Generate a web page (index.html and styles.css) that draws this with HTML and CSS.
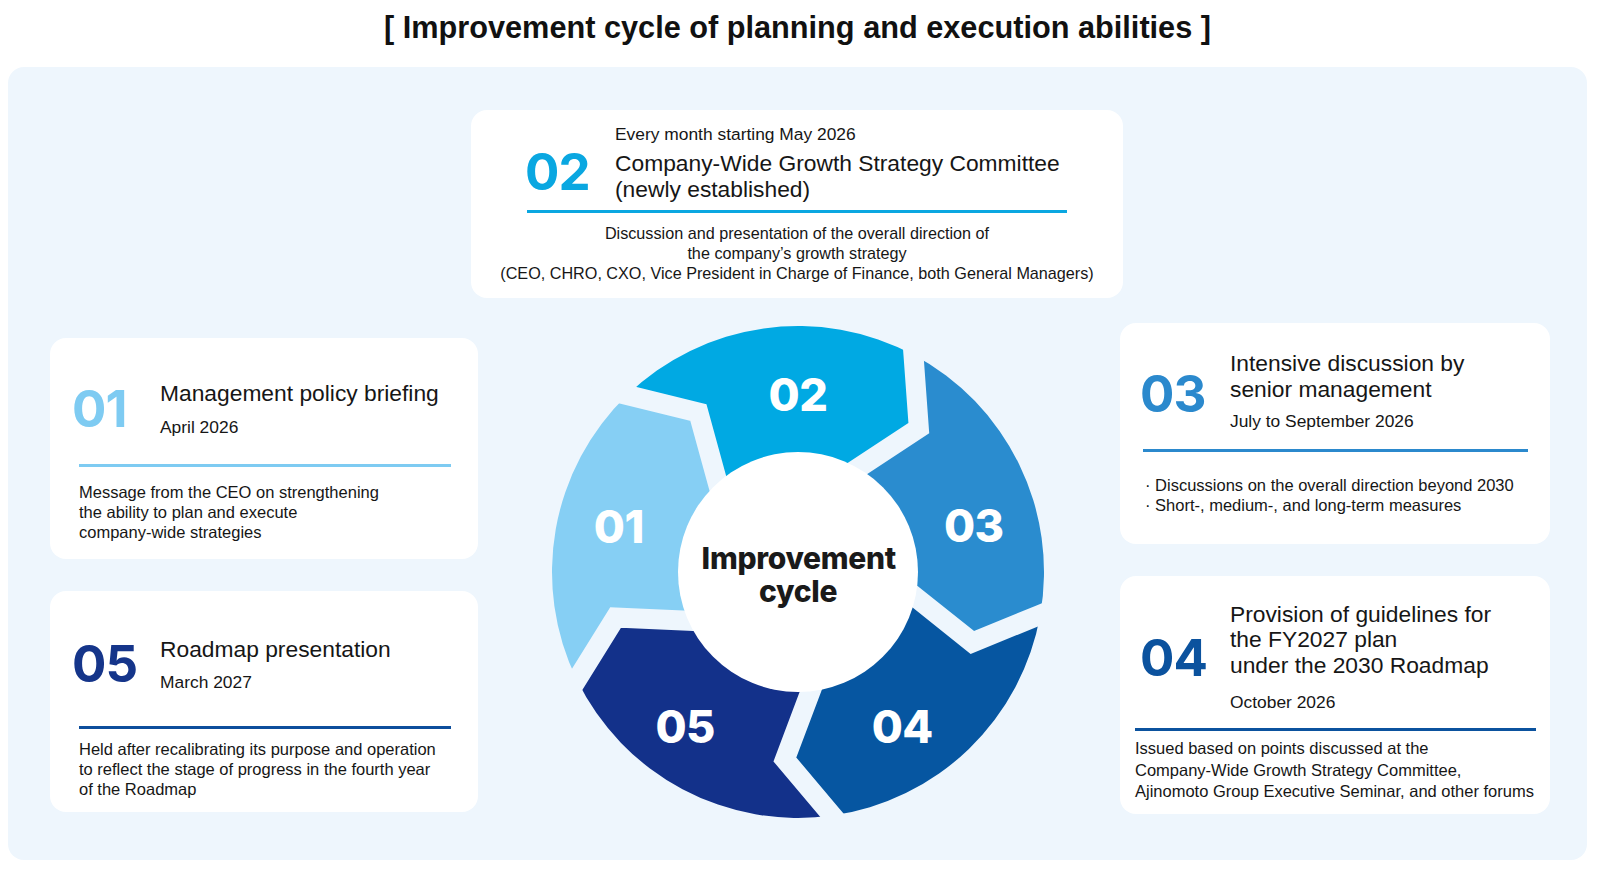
FILE: index.html
```html
<!DOCTYPE html>
<html lang="en">
<head>
<meta charset="utf-8">
<title>Improvement cycle of planning and execution abilities</title>
<link rel="stylesheet" href="styles.css">
</head>
<body>
<div class="page">
  <h1 class="title">[ Improvement cycle of planning and execution abilities ]</h1>
  <div class="panel">
    <div class="card card-top">
      <div class="head-row">
        <div class="num num-02">02</div>
        <div class="titles">
          <div class="label">Every month starting May 2026</div>
          <div class="heading">Company-Wide Growth Strategy Committee<br>(newly established)</div>
        </div>
      </div>
      <div class="rule rule-02"></div>
      <p class="body body-center">Discussion and presentation of the overall direction of<br>the company’s growth strategy<br>(CEO, CHRO, CXO, Vice President in Charge of Finance, both General Managers)</p>
    </div>

    <div class="main-row">
      <div class="col col-left">
        <div class="card card-side card-01">
          <div class="side-head">
            <div class="num num-01">01</div>
            <div class="titles">
              <div class="heading">Management policy briefing</div>
              <div class="date">April 2026</div>
            </div>
          </div>
          <div class="rule rule-01"></div>
          <p class="body">Message from the CEO on strengthening<br>the ability to plan and execute<br>company-wide strategies</p>
        </div>
        <div class="card card-side card-05">
          <div class="side-head">
            <div class="num num-05">05</div>
            <div class="titles">
              <div class="heading">Roadmap presentation</div>
              <div class="date">March 2027</div>
            </div>
          </div>
          <div class="rule rule-05"></div>
          <p class="body">Held after recalibrating its purpose and operation<br>to reflect the stage of progress in the fourth year<br>of the Roadmap</p>
        </div>
      </div>

      <svg class="cycle" viewBox="0 0 500 500" width="500" height="500">
        <defs>
          <path id="seg" d="M 79.1 73.05 A 246 246 0 0 1 365.5 32.8 L 370.8 106 L 310 146.1 L 250 250 L 169.7 160.8 L 150.4 90.6 Z"/>
          <polyline id="gap" points="43.4,64.3 79.1,73.05 150.4,90.6 169.7,160.8 176.5,185.4" fill="none" stroke="#eef6fd" stroke-width="20" stroke-linejoin="miter" stroke-miterlimit="10"/>
        </defs>
        <use href="#seg" fill="#00a9e3"/>
        <use href="#seg" fill="#2a8ccf" transform="rotate(72 250 250)"/>
        <use href="#seg" fill="#0656a1" transform="rotate(144 250 250)"/>
        <use href="#seg" fill="#13318a" transform="rotate(216 250 250)"/>
        <use href="#seg" fill="#86cff4" transform="rotate(288 250 250)"/>
        <use href="#gap"/>
        <use href="#gap" transform="rotate(72 250 250)"/>
        <use href="#gap" transform="rotate(144 250 250)"/>
        <use href="#gap" transform="rotate(216 250 250)"/>
        <use href="#gap" transform="rotate(288 250 250)"/>
        <circle cx="250" cy="250" r="120" fill="#ffffff"/>
        <g class="seg-num">
          <text x="250" y="89">02</text>
          <text x="70.8" y="220.6">01</text>
          <text x="425.8" y="220">03</text>
          <text x="354.2" y="421.4">04</text>
          <text x="137.2" y="421.4">05</text>
        </g>
        <g class="center-text">
          <text x="250.8" y="246.6">Improvement</text>
          <text x="250" y="280">cycle</text>
        </g>
      </svg>

      <div class="col col-right">
        <div class="card card-side card-03">
          <div class="side-head">
            <div class="num num-03">03</div>
            <div class="titles">
              <div class="heading">Intensive discussion by<br>senior management</div>
              <div class="date">July to September 2026</div>
            </div>
          </div>
          <div class="rule rule-03"></div>
          <p class="body">· Discussions on the overall direction beyond 2030<br>· Short-, medium-, and long-term measures</p>
        </div>
        <div class="card card-side card-04">
          <div class="side-head">
            <div class="num num-04">04</div>
            <div class="titles">
              <div class="heading">Provision of guidelines for<br>the FY2027 plan<br>under the 2030 Roadmap</div>
              <div class="date">October 2026</div>
            </div>
          </div>
          <div class="rule rule-04"></div>
          <p class="body">Issued based on points discussed at the<br>Company-Wide Growth Strategy Committee,<br>Ajinomoto Group Executive Seminar, and other forums</p>
        </div>
      </div>
    </div>
  </div>
</div>
</body>
</html>
```

FILE: styles.css
```css
* { box-sizing: border-box; }

body {
  margin: 0;
  background: #ffffff;
  font-family: "Liberation Sans", Arial, sans-serif;
  color: #161616;
}

.page {
  width: 1579px;
  margin-left: 8px;
}

.title {
  margin: 10px 0 21px;
  font-size: 30.7px;
  line-height: 36px;
  font-weight: 700;
  text-align: center;
  color: #111111;
}

.panel {
  height: 793px;
  background: #eef6fd;
  border-radius: 16px;
  padding: 43px 37px 0 42px;
  display: flex;
  flex-direction: column;
}

.card {
  background: #ffffff;
  border-radius: 16px;
}

/* ---------- top card (02) ---------- */
.card-top {
  width: 652px;
  margin-left: 421px;
  padding: 14px 56px 15px;
}

.head-row {
  display: flex;
  align-items: flex-end;
}

.num {
  flex: none;
  font-family: "Inter", "Liberation Sans", sans-serif;
  font-weight: 700;
  font-size: 51px;
  line-height: 52px;
  letter-spacing: -1px;
}

.num-02 { width: 90px; margin-left: -2px; margin-bottom: 4px; color: #0aa7e1; }
.num-01 { width: 88px; margin-left: -7px; color: #7ecbf2; }
.num-05 { width: 88px; margin-left: -7px; color: #15358a; }
.num-03 { width: 90px; margin-left: -3px; margin-top: 7px; color: #2b89cd; }
.num-04 { width: 90px; margin-left: 5px; color: #0b529e; }

.label {
  font-size: 17.4px;
  line-height: 21px;
}

.heading {
  font-size: 22.8px;
  line-height: 26px;
}

.card-top .heading {
  margin-top: 6px;
  line-height: 25.5px;
}

.date {
  font-size: 17.4px;
  line-height: 22px;
}

.rule {
  height: 3px;
}

.rule-02 { background: #0aa7e1; margin-top: 8px; }
.rule-01 { background: #7ecbf2; }
.rule-05 { background: #0d4e9c; }
.rule-03 { background: #2b89cd; }
.rule-04 { background: #0b529e; }

.body {
  margin: 0;
  font-size: 16.5px;
  line-height: 20px;
}

.body-center {
  margin: 9.5px -40px 0;
  text-align: center;
  font-size: 16.2px;
}

/* ---------- main row ---------- */
.main-row {
  display: flex;
  align-items: flex-start;
}

.col {
  display: flex;
  flex-direction: column;
  flex: none;
}

.col-left {
  width: 428px;
  margin-top: 40px;
  gap: 32px;
}

.col-right {
  width: 430px;
  margin-top: 25px;
  margin-left: auto;
  gap: 32px;
}

.cycle {
  flex: none;
  width: 500px;
  height: 500px;
  margin-top: 24px;
  margin-left: 69.5px;
  display: block;
}

.seg-num text {
  font-family: "Inter", "Liberation Sans", sans-serif;
  font-weight: 800;
  font-size: 45px;
  fill: #ffffff;
  text-anchor: middle;
  letter-spacing: -0.5px;
}

.center-text text {
  font-family: "Inter", "Liberation Sans", sans-serif;
  font-weight: 800;
  font-size: 30px;
  fill: #1a1a1a;
  text-anchor: middle;
  letter-spacing: -0.3px;
}

/* ---------- side cards ---------- */
.side-head {
  display: flex;
  align-items: center;
}

.card-01 { padding: 42.5px 27px 17.4px 29px; }
.card-01 .date { margin-top: 10px; }
.card-01 .rule { margin-top: 26px; }
.card-01 .body { margin-top: 14.6px; }

.card-05 { padding: 44.7px 27px 13.7px 29px; }
.card-05 .date { margin-top: 9.6px; }
.card-05 .rule { margin-top: 32.7px; }
.card-05 .body { margin-top: 9.6px; }

.card-03 { padding: 27.5px 22px 29px 23px; }
.card-03 .date { margin-top: 7.5px; }
.card-03 .rule { margin-top: 17.7px; }
.card-03 .body { margin-top: 23px; padding-left: 2px; }

.card-04 { padding: 25.8px 14px 11.2px 15px; }
.card-04 .heading { line-height: 25.5px; }
.card-04 .date { margin-top: 13px; }
.card-04 .rule { margin-top: 14.4px; }
.card-04 .body { margin-top: 7px; line-height: 21.7px; }
```
